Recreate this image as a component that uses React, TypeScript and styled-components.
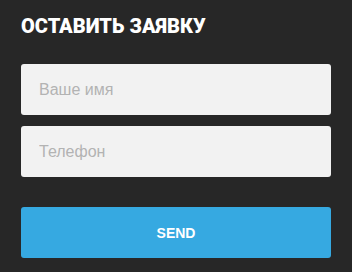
import React from "react";
import styled, { createGlobalStyle } from "styled-components";

const Global = createGlobalStyle`
  html, body { margin: 0; padding: 0; background: #272727; }
  body { width: 352px; height: 272px; overflow: hidden; }
`;

const Panel = styled.div`
  box-sizing: border-box;
  width: 352px;
  height: 272px;
  padding: 16px 21px 0 21px;
  background: #272727;
  display: flex;
  flex-direction: column;
`;

const Title = styled.h2`
  margin: 0 0 27px 0;
  font-family: Roboto, "Liberation Sans", sans-serif;
  font-weight: 900;
  font-size: 20px;
  line-height: 21px;
  color: #ffffff;
  letter-spacing: 0;
`;

const Form = styled.form`
  display: flex;
  flex-direction: column;
  gap: 11px;
  margin: 0;
`;

const Field = styled.input`
  box-sizing: border-box;
  width: 310px;
  height: 51px;
  border: none;
  border-radius: 3px;
  background: #f2f2f2;
  padding: 0 18px;
  font-family: "Liberation Sans", Arial, sans-serif;
  font-size: 16px;
  color: #333;
  outline: none;
  &::placeholder { color: #b3b3b3; }
`;

const Send = styled.button`
  box-sizing: border-box;
  width: 310px;
  height: 51px;
  margin-top: 19px;
  border: none;
  border-radius: 3px;
  background: #36a9e1;
  color: #ffffff;
  font-family: "Liberation Sans", Arial, sans-serif;
  font-weight: 700;
  font-size: 14px;
  text-transform: uppercase;
  cursor: pointer;
`;

export default function App() {
  return (
    <>
      <Global />
      <Panel>
        <Title>ОСТАВИТЬ ЗАЯВКУ</Title>
        <Form onSubmit={(e) => e.preventDefault()}>
          <Field type="text" placeholder="Ваше имя" />
          <Field type="tel" placeholder="Телефон" />
          <Send type="submit">Send</Send>
        </Form>
      </Panel>
    </>
  );
}
